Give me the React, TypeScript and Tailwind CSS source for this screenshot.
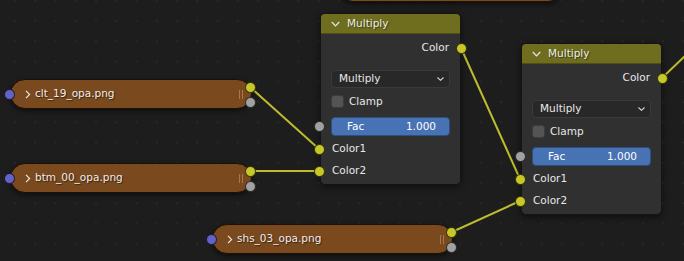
type SocketKind = 'yellow' | 'grey' | 'blue'

const socketColor: Record<SocketKind, string> = {
  yellow: 'bg-[#c7c729]',
  grey: 'bg-[#a1a1a1]',
  blue: 'bg-[#6363c7]',
}

function Socket({ kind, x, y }: { kind: SocketKind; x: number; y: number }) {
  // x/y are the socket centre relative to the node
  return (
    <span
      className={`absolute w-[11px] h-[11px] rounded-full border border-black/70 ${socketColor[kind]}`}
      style={{ left: x - 5.5, top: y - 5.5 }}
    />
  )
}

function ImageNode({ x, y, w, label }: { x: number; y: number; w: number; label: string }) {
  return (
    <div
      className="absolute h-[30px] rounded-[15px] bg-[#7a491d] border border-[#1a1108] shadow-[0_2px_5px_rgba(0,0,0,0.55)] flex items-center"
      style={{ left: x, top: y, width: w }}
    >
      <svg width="6" height="9" viewBox="0 0 6 9" className="ml-[14px] mr-[4px]">
        <polyline points="1,0.8 4.6,4.5 1,8.2" fill="none" stroke="#e6e6e6" strokeWidth="1.2" />
      </svg>
      <span className="text-[10.5px] text-[#ececec] [text-shadow:1px_1px_1px_rgba(0,0,0,0.55)]">{label}</span>
      <span className="ml-auto mr-[8px] flex gap-[2px]">
        <span className="w-[1px] h-[9px] bg-[#a8784a]" />
        <span className="w-[1px] h-[9px] bg-[#a8784a]" />
      </span>
      <Socket kind="blue" x={-2} y={14} />
      <Socket kind="yellow" x={w - 3} y={7} />
      <Socket kind="grey" x={w - 3} y={22} />
    </div>
  )
}

function MultiplyNode({ x, y }: { x: number; y: number }) {
  const w = 141
  return (
    <div
      className="absolute h-[172px] rounded-[5px] bg-[#303030] border border-[#141414] shadow-[0_2px_6px_rgba(0,0,0,0.55)] flex flex-col"
      style={{ left: x, top: y, width: w }}
    >
      <div className="h-[20px] shrink-0 rounded-t-[4px] bg-[#6f6e1f] border-b border-[#4e4e16] flex items-center">
        <svg width="9" height="6" viewBox="0 0 9 6" className="ml-[10px] mr-[7px]">
          <polyline points="0.8,1 4.5,4.8 8.2,1" fill="none" stroke="#e6e6e6" strokeWidth="1.2" />
        </svg>
        <span className="text-[10.5px] text-[#ececec] [text-shadow:1px_1px_1px_rgba(0,0,0,0.5)]">Multiply</span>
      </div>
      <div className="mt-[3px] h-[22px] flex items-center justify-end pr-[11px] text-[10.5px] text-[#e8e8e8]">Color</div>
      <div className="mt-[11px] mx-[10px] h-[18px] rounded-[4px] bg-[#282828] border border-[#3a3a3a] flex items-center pl-[7px] pr-[5px] text-[10.5px] text-[#e8e8e8]">
        <span>Multiply</span>
        <svg width="7" height="4" viewBox="0 0 7 4" className="ml-auto">
          <polyline points="0.5,0.5 3.5,3.3 6.5,0.5" fill="none" stroke="#d8d8d8" strokeWidth="1.1" />
        </svg>
      </div>
      <div className="mt-[4px] mx-[10px] h-[19px] flex items-center gap-[5px] text-[10.5px] text-[#e8e8e8]">
        <span className="w-[13px] h-[13px] rounded-[3px] bg-[#545454] border border-[#3c3c3c]" />
        <span>Clamp</span>
      </div>
      <div className="mt-[6px] mx-[10px] h-[19px] rounded-[4px] bg-[#4772b3] border border-[#2f4f80] flex items-center pl-[15px] pr-[13px] text-[10.5px] text-white">
        <span>Fac</span>
        <span className="ml-auto">1.000</span>
      </div>
      <div className="mt-[2px] h-[22px] flex items-center pl-[11px] text-[10.5px] text-[#e8e8e8]">Color1</div>
      <div className="h-[22px] flex items-center pl-[11px] text-[10.5px] text-[#e8e8e8]">Color2</div>
      <Socket kind="yellow" x={w - 1} y={34} />
      <Socket kind="grey" x={-2} y={112} />
      <Socket kind="yellow" x={-2} y={135} />
      <Socket kind="yellow" x={-2} y={157} />
    </div>
  )
}

const links: [number, number, number, number][] = [
  [250, 87, 319, 149],
  [250, 171, 319, 171],
  [461, 48, 520, 179],
  [452, 232, 520, 201],
  [662, 78, 690, 51],
]

export default function App() {
  return (
    <div className="relative w-[684px] h-[261px] overflow-hidden bg-[#1d1d1d] font-['DejaVu_Sans',sans-serif]">
      <svg className="absolute inset-0" width="684" height="261">
        <defs>
          <pattern id="grid" x="14" y="20" width="20.25" height="20.25" patternUnits="userSpaceOnUse">
            <rect width="2" height="2" fill="#272727" />
          </pattern>
        </defs>
        <rect width="684" height="261" fill="url(#grid)" />
        {links.map(([x1, y1, x2, y2], i) => (
          <line key={i} x1={x1} y1={y1} x2={x2} y2={y2} stroke="#bcbc2c" strokeWidth="2" strokeLinecap="round" />
        ))}
      </svg>

      <div className="absolute left-[338px] top-[-28px] w-[225px] h-[30px] rounded-[15px] bg-[#7a491d] border border-[#1a1108] shadow-[0_2px_5px_rgba(0,0,0,0.55)]" />

      <ImageNode x={10} y={79} w={242} label="clt_19_opa.png" />
      <ImageNode x={10} y={163} w={242} label="btm_00_opa.png" />
      <ImageNode x={212} y={224} w={241} label="shs_03_opa.png" />

      <MultiplyNode x={320} y={13} />
      <MultiplyNode x={521} y={43} />
    </div>
  )
}
